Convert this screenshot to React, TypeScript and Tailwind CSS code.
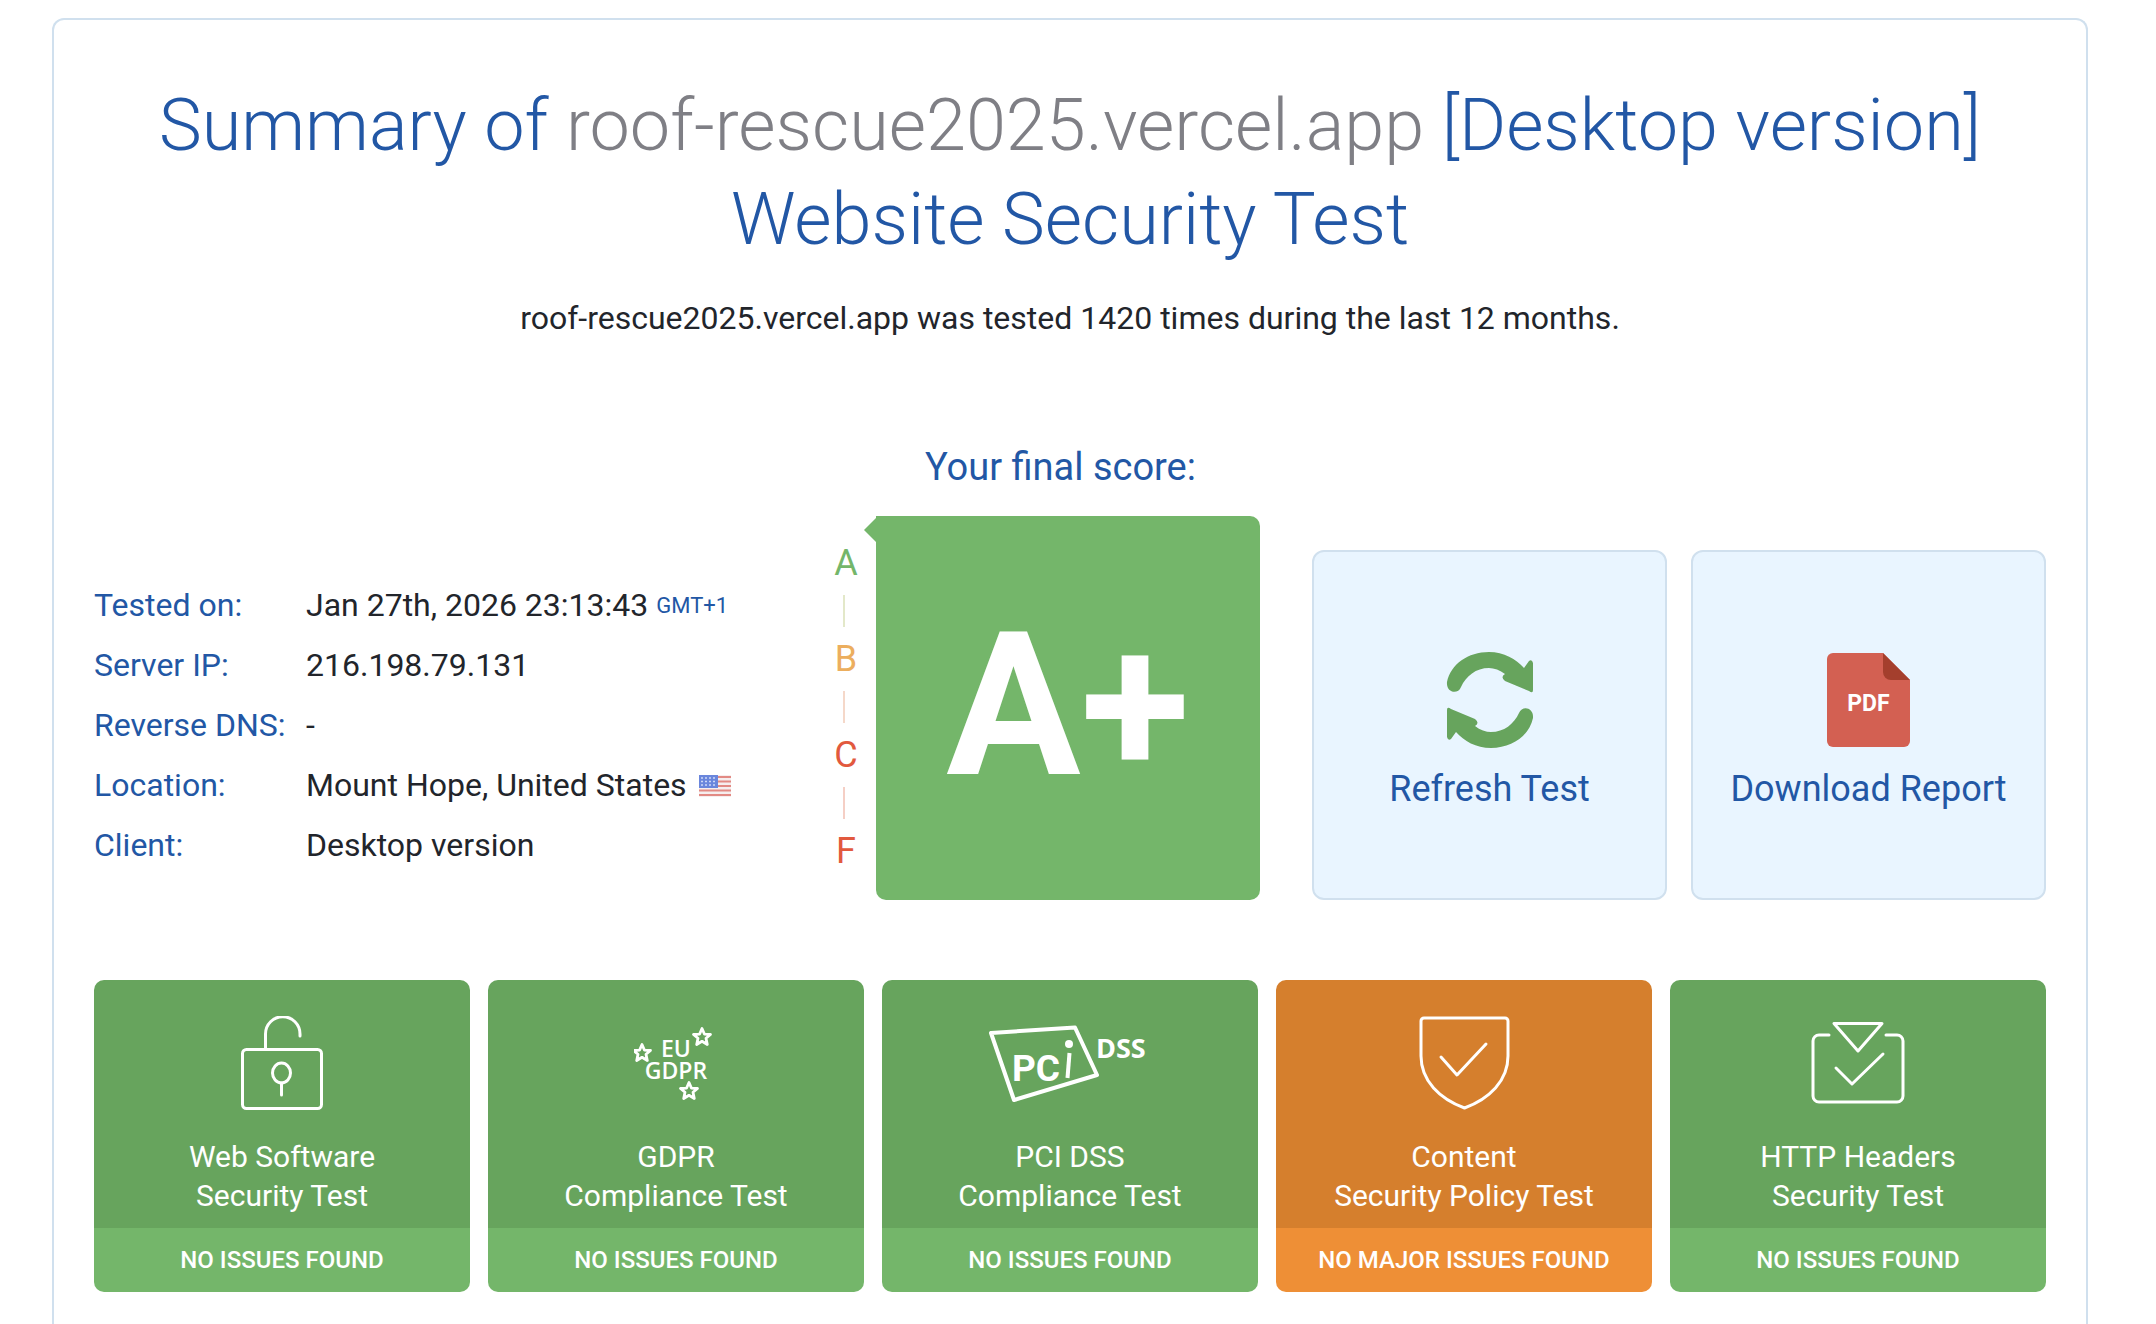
import React from 'react'

function RefreshIcon() {
  const arc =
    'M1 30C5 12 22 0 43 0C58 0 70 7 78 16L83 9Q86 7 87 11L87 38Q87 42 83 39L59 29Q54 25 59 22C54 18 48 16 43 16C30 16 20 24 15 35C12 43 0 41 1 30Z'
  return (
    <svg width="88" height="96" viewBox="0 0 88 96" fill="#67a45d">
      <path d={arc} />
      <path d={arc} transform="rotate(180 44 48)" />
    </svg>
  )
}

function PdfIcon() {
  return (
    <svg width="84" height="94" viewBox="0 0 84 94">
      <path d="M6 0H56L83 27V88a6 6 0 0 1-6 6H6a6 6 0 0 1-6-6V6a6 6 0 0 1 6-6Z" fill="#d36052" />
      <path d="M56 0L83 27H64a8 8 0 0 1-8-8Z" fill="#a43f2d" />
      <text x="41.5" y="58" textAnchor="middle" fill="#fff" fontSize="23" fontWeight="700" fontFamily="Roboto, sans-serif">
        PDF
      </text>
    </svg>
  )
}

function LockIcon() {
  return (
    <svg width="82" height="96" viewBox="0 0 82 96" fill="none" stroke="#fff" strokeWidth="3" strokeLinecap="round" strokeLinejoin="round">
      <rect x="1.5" y="33.5" width="79" height="59" rx="4" />
      <path d="M24.5 32V18A17 17 0 0 1 59 18V20" />
      <ellipse cx="40.5" cy="57" rx="9" ry="10" />
      <path d="M40.5 67V79" />
    </svg>
  )
}

function Star({ x, y }: { x: number; y: number }) {
  return (
    <polygon
      transform={`translate(${x} ${y})`}
      points="0,-8.500 2.500,-2.800 8.500,-2.500 4,1.300 5.300,7.500 0,4.300 -5.300,7.500 -4,1.300 -8.500,-2.500 -2.500,-2.800"
      fill="none"
      stroke="#fff"
      strokeWidth="2.800"
      strokeLinejoin="round"
    />
  )
}

function GdprIcon() {
  return (
    <svg width="84" height="78" viewBox="0 0 84 78">
      <Star x={8} y={28} />
      <Star x={68} y={12} />
      <Star x={55} y={66} />
      <g fill="#fff" fontSize="23" fontWeight="600" textAnchor="middle" fontFamily="'Open Sans', sans-serif">
        <text x="42" y="32">EU</text>
        <text x="42" y="54">GDPR</text>
      </g>
    </svg>
  )
}

function PciIcon() {
  return (
    <svg width="164" height="80" viewBox="0 0 164 80">
      <path d="M3 9L87 3.500L109 51L26 76Z" fill="none" stroke="#fff" strokeWidth="4" strokeLinejoin="round" />
      <text x="24" y="56.500" fill="#fff" fontSize="37" fontWeight="700" fontFamily="Roboto, sans-serif">
        PC
      </text>
      <circle cx="81" cy="20" r="4" fill="#fff" />
      <path d="M81.500 29L79.500 54" stroke="#fff" strokeWidth="4" />
      <text x="108" y="34" fill="#fff" fontSize="27" fontWeight="700" fontFamily="'Open Sans', sans-serif">
        DSS
      </text>
    </svg>
  )
}

function ShieldIcon() {
  return (
    <svg width="91" height="96" viewBox="0 0 91 96" fill="none" stroke="#fff" strokeWidth="3" strokeLinecap="round" strokeLinejoin="round">
      <path d="M5 2H86a3 3 0 0 1 3 3V40C89 65 70 83 45.500 92C21 83 2 65 2 40V5a3 3 0 0 1 3-3Z" />
      <path d="M22 41L38 59L67 28" />
    </svg>
  )
}

function HeadersIcon() {
  return (
    <svg width="94" height="84" viewBox="0 0 94 84" fill="none" stroke="#fff" strokeWidth="3" strokeLinecap="round" strokeLinejoin="round">
      <path d="M18 13H8a6 6 0 0 0-6 6V74a6 6 0 0 0 6 6H86a6 6 0 0 0 6-6V19a6 6 0 0 0-6-6H75" />
      <path d="M23 1.500H71L47 29Z" />
      <path d="M25 46L41 62L72 32" />
    </svg>
  )
}

function UsFlag() {
  return (
    <svg width="32" height="22" viewBox="0 0 32 22" className="inline-block">
      <rect width="32" height="22" fill="#f6eeee" />
      <path d="M19 2H32M19 6.500H32M19 11H32M0 15.500H32M0 20H32" stroke="#e28a84" strokeWidth="2.200" />
      <rect width="19" height="13" fill="#6a86dc" />
      <path d="M2 3H17M2 6.500H17M2 10H17" stroke="#cdd8f6" strokeWidth="1.500" strokeDasharray="2 2" />
    </svg>
  )
}

const info = [
  { label: 'Tested on:', value: 'Jan 27th, 2026 23:13:43', extra: <span className="ml-2 text-[22px] text-[#2257a5]">GMT+1</span> },
  { label: 'Server IP:', value: '216.198.79.131' },
  { label: 'Reverse DNS:', value: '-' },
  { label: 'Location:', value: 'Mount Hope, United States', extra: <span className="ml-3 relative -top-[2px]"><UsFlag /></span> },
  { label: 'Client:', value: 'Desktop version' },
]

const tests = [
  { icon: <LockIcon />, top: 'Web Software', bottom: 'Security Test', status: 'NO ISSUES FOUND' },
  { icon: <GdprIcon />, top: 'GDPR', bottom: 'Compliance Test', status: 'NO ISSUES FOUND' },
  { icon: <PciIcon />, top: 'PCI DSS', bottom: 'Compliance Test', status: 'NO ISSUES FOUND' },
  { icon: <ShieldIcon />, top: 'Content', bottom: 'Security Policy Test', status: 'NO MAJOR ISSUES FOUND', warn: true },
  { icon: <HeadersIcon />, top: 'HTTP Headers', bottom: 'Security Test', status: 'NO ISSUES FOUND' },
]

function GradeLadder() {
  return (
    <div className="w-[36px] pt-[23px] flex flex-col items-center text-[36px] leading-[48px]">
      <span className="text-[#74b66a]">A</span>
      <span className="h-[32px] w-[2px] my-[8px] -ml-[4px] bg-[#e3e8c9]" />
      <span className="text-[#ecae5e]">B</span>
      <span className="h-[32px] w-[2px] my-[8px] -ml-[4px] bg-[#f5d8c9]" />
      <span className="text-[#e2593e]">C</span>
      <span className="h-[32px] w-[2px] my-[8px] -ml-[4px] bg-[#f5cfc5]" />
      <span className="text-[#e2593e]">F</span>
    </div>
  )
}

function ActionBox({ icon, label }: { icon: React.ReactNode; label: string }) {
  return (
    <div className="w-[355px] h-[350px] flex flex-col items-center pt-[100px] bg-[#e9f5ff] border-2 border-[#d0e0ee] rounded-[12px]">
      <div className="h-[96px] flex items-center">{icon}</div>
      <div className="mt-[19px] text-[36px] leading-[44px] text-[#2257a5]">{label}</div>
    </div>
  )
}

export default function App() {
  return (
    <div className="h-[1324px] overflow-hidden bg-white pt-[18px] pl-[52px] [font-family:Roboto,sans-serif] text-[#22252b]">
      <div className="w-[2036px] h-[1320px] px-[40px] border-2 border-b-0 border-[#d0e0ee] rounded-t-[12px]">
        <h1 className="pt-[59px] text-center text-[72px] leading-[94px] font-light text-[#2257a5]">
          Summary of <span className="text-[#7f7f85]">roof-rescue2025.vercel.app</span> [Desktop version]
          <br />
          Website Security Test
        </h1>
        <p className="mt-[29px] text-center text-[32px] leading-[44px]">
          roof-rescue2025.vercel.app was tested 1420 times during the last 12 months.
        </p>

        <div className="mt-[166px] flex items-start">
          <div className="w-[734px] pt-[69px]">
            {info.map(row => (
              <div key={row.label} className="flex h-[60px] items-center text-[32px]">
                <span className="w-[212px] text-[#2257a5]">{row.label}</span>
                <span>{row.value}</span>
                {row.extra}
              </div>
            ))}
          </div>
          <div className="-mt-[62px] w-[432px]">
            <div className="ml-[33px] mb-[26px] text-center text-[38px] leading-[46px] text-[#2257a5]">Your final score:</div>
            <div className="flex">
              <GradeLadder />
              <div className="relative ml-[12px] w-[384px] h-[384px] flex items-center justify-center bg-[#74b66a] rounded-[10px] rounded-tl-none">
                <span className="absolute -left-[12px] top-[2px] w-0 h-0 border-y-[12px] border-y-transparent border-r-[12px] border-r-[#74b66a]" />
                <span className="-mt-[4px] font-bold text-[200px] leading-none text-white">A+</span>
              </div>
            </div>
          </div>
          <div className="ml-[52px] mt-[44px] flex gap-[24px]">
            <ActionBox icon={<RefreshIcon />} label="Refresh Test" />
            <ActionBox icon={<PdfIcon />} label="Download Report" />
          </div>
        </div>

        <div className="mt-[80px] flex gap-[18px]">
          {tests.map(t => (
            <div key={t.top} className="w-[376px] h-[312px] flex flex-col rounded-[10px] overflow-hidden text-white">
              <div className={`h-[248px] pt-[36px] flex flex-col items-center ${t.warn ? 'bg-[#d57f2d]' : 'bg-[#67a45d]'}`}>
                <div className="h-[96px] flex items-center">{t.icon}</div>
                <div className="mt-[25px] text-center text-[30px] leading-[39px]">
                  {t.top}
                  <br />
                  {t.bottom}
                </div>
              </div>
              <div className={`h-[64px] flex items-center justify-center text-[24px] font-medium ${t.warn ? 'bg-[#ee8f36]' : 'bg-[#74b66a]'}`}>
                {t.status}
              </div>
            </div>
          ))}
        </div>
      </div>
    </div>
  )
}
